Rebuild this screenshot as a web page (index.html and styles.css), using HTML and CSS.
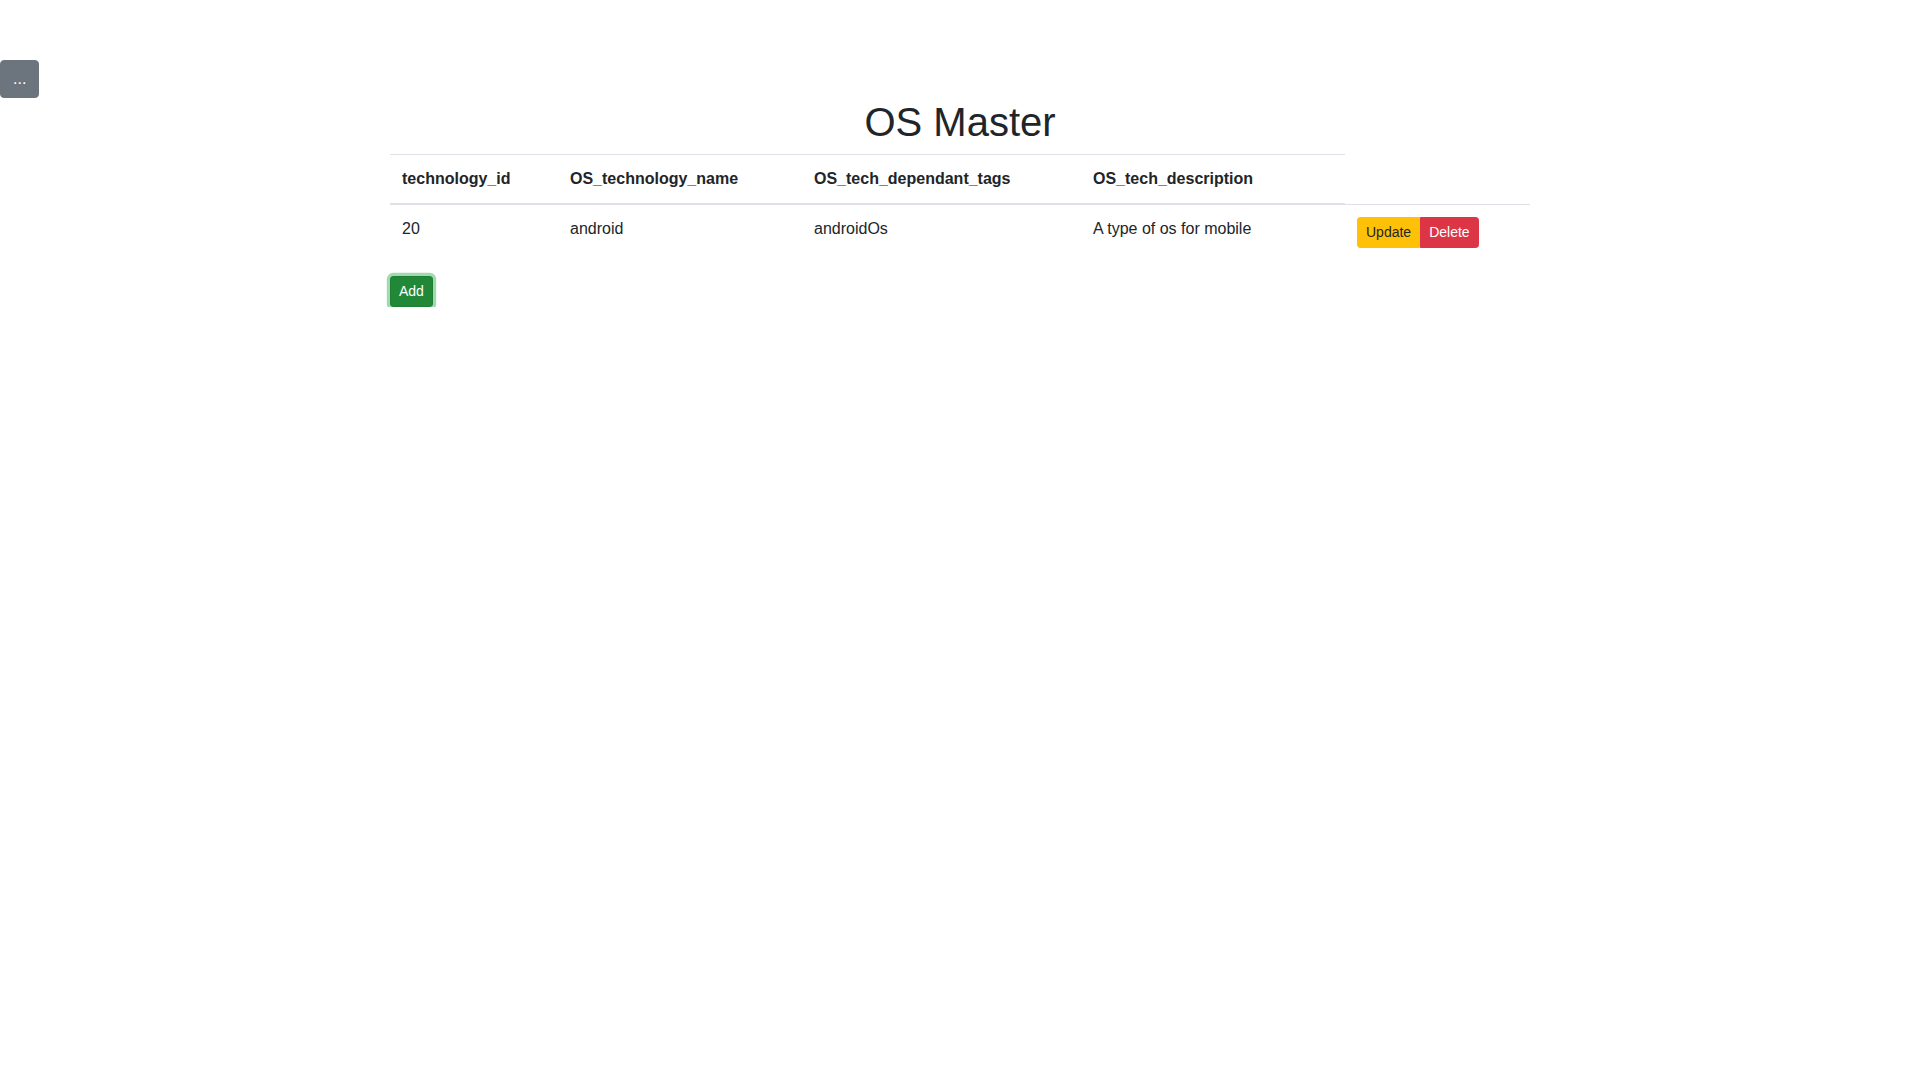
FILE: index.html
```html
<!DOCTYPE html>
<html lang="en">
<head>
<meta charset="utf-8">
<title>OS Master</title>
<link rel="stylesheet" href="styles.css">
</head>
<body>
<button class="btn btn-secondary menu-btn" type="button">...</button>
<div class="container">
  <h1 class="title">OS Master</h1>
  <table class="table">
    <colgroup>
      <col class="c1"><col class="c2"><col class="c3"><col class="c4"><col class="c5">
    </colgroup>
    <thead>
      <tr>
        <th>technology_id</th>
        <th>OS_technology_name</th>
        <th>OS_tech_dependant_tags</th>
        <th>OS_tech_description</th>
      </tr>
    </thead>
    <tbody>
      <tr>
        <td>20</td>
        <td>android</td>
        <td>androidOs</td>
        <td>A type of os for mobile</td>
        <td>
          <div class="btn-group">
            <button class="btn btn-sm btn-warning" type="button">Update</button>
            <button class="btn btn-sm btn-danger" type="button">Delete</button>
          </div>
        </td>
      </tr>
    </tbody>
  </table>
  <button class="btn btn-sm btn-success add-btn" type="button">Add</button>
</div>
</body>
</html>
```
FILE: styles.css
```css
* { box-sizing: border-box; }

body {
  margin: 0;
  font-family: "Liberation Sans", Arial, Helvetica, sans-serif;
  font-size: 16px;
  line-height: 1.5;
  color: #212529;
  background: #fff;
}

.btn {
  display: inline-block;
  font-family: inherit;
  font-weight: 400;
  text-align: center;
  vertical-align: middle;
  border: 1px solid transparent;
  padding: 6px 12px;
  font-size: 16px;
  line-height: 1.5;
  border-radius: 4px;
  cursor: pointer;
}

.btn-sm {
  padding: 4px 8px;
  font-size: 14px;
  line-height: 1.5;
  border-radius: 3.2px;
}

.btn-secondary {
  color: #fff;
  background-color: #6c757d;
  border-color: #6c757d;
}

.btn-warning {
  color: #212529;
  background-color: #ffc107;
  border-color: #ffc107;
}

.btn-danger {
  color: #fff;
  background-color: #dc3545;
  border-color: #dc3545;
}

.btn-success {
  color: #fff;
  background-color: #218838;
  border-color: #1e7e34;
}

.menu-btn {
  display: block;
  margin-top: 60px;
}

.container {
  width: 1140px;
  margin: 0 auto;
}

.title {
  margin: 0 0 8px;
  font-size: 40px;
  font-weight: 500;
  line-height: 1.2;
  text-align: center;
}

.table {
  width: 100%;
  margin-bottom: 16px;
  border-collapse: collapse;
  table-layout: fixed;
  color: #212529;
}

.c1 { width: 168px; }
.c2 { width: 244px; }
.c3 { width: 279px; }
.c4 { width: 264px; }
.c5 { width: 185px; }

.table th,
.table td {
  padding: 12px;
  vertical-align: top;
  border-top: 1px solid #dee2e6;
  text-align: left;
}

.table thead th {
  vertical-align: bottom;
  border-bottom: 2px solid #dee2e6;
  font-weight: 700;
}

.btn-group {
  display: inline-flex;
  vertical-align: middle;
}

.btn-group .btn-warning {
  border-top-right-radius: 0;
  border-bottom-right-radius: 0;
}

.btn-group .btn-danger {
  border-top-left-radius: 0;
  border-bottom-left-radius: 0;
}

.add-btn {
  box-shadow: 0 0 0 3.2px rgba(72, 180, 97, 0.5);
}
```
